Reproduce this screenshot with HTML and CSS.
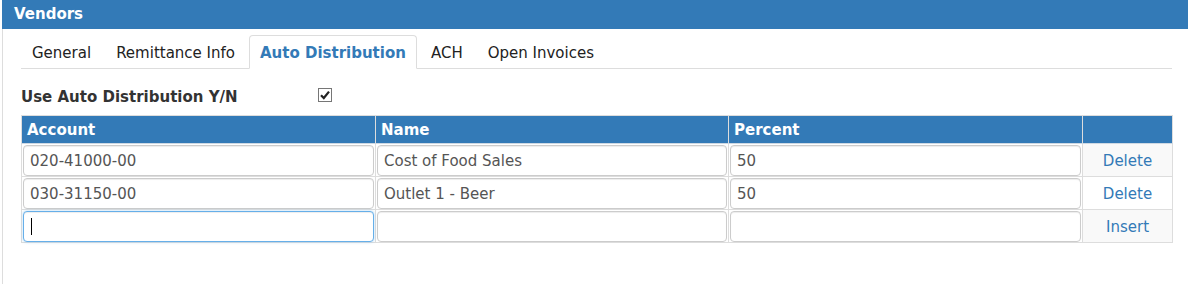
FILE: index.html
```html
<!DOCTYPE html>
<html lang="en">
<head>
    <meta charset="UTF-8">
    <title>Vendors</title>
    <link rel="stylesheet" href="styles.css">
</head>
<body>
    <div class="panel">
        <div class="panel-heading">Vendors</div>
        <div class="panel-body">
            <ul class="nav-tabs">
                <li><a href="#">General</a></li>
                <li><a href="#">Remittance Info</a></li>
                <li class="active"><a href="#">Auto Distribution</a></li>
                <li><a href="#">ACH</a></li>
                <li><a href="#">Open Invoices</a></li>
            </ul>

            <div class="form-row">
                <span class="form-label">Use Auto Distribution Y/N</span>
                <span class="form-check">
                    <svg viewBox="0 0 14 14" width="14" height="14">
                        <rect x="0.5" y="0.5" width="13" height="13" fill="#ffffff" stroke="#767676"/>
                        <path d="M3 7.2 L5.8 10 L11 3.6" fill="none" stroke="#222222" stroke-width="2.2"/>
                    </svg>
                </span>
            </div>

            <table class="dist-table">
                <colgroup>
                    <col class="col-account">
                    <col class="col-name">
                    <col class="col-percent">
                    <col class="col-action">
                </colgroup>
                <thead>
                    <tr>
                        <th>Account</th>
                        <th>Name</th>
                        <th>Percent</th>
                        <th></th>
                    </tr>
                </thead>
                <tbody>
                    <tr>
                        <td><input class="cell-input" type="text" value="020-41000-00"></td>
                        <td><input class="cell-input" type="text" value="Cost of Food Sales"></td>
                        <td><input class="cell-input" type="text" value="50"></td>
                        <td class="action"><a href="#">Delete</a></td>
                    </tr>
                    <tr>
                        <td><input class="cell-input" type="text" value="030-31150-00"></td>
                        <td><input class="cell-input" type="text" value="Outlet 1 - Beer"></td>
                        <td><input class="cell-input" type="text" value="50"></td>
                        <td class="action"><a href="#">Delete</a></td>
                    </tr>
                    <tr>
                        <td><input class="cell-input focused" type="text" value=""><span class="caret"></span></td>
                        <td><input class="cell-input" type="text" value=""></td>
                        <td><input class="cell-input" type="text" value=""></td>
                        <td class="action"><a href="#">Insert</a></td>
                    </tr>
                </tbody>
            </table>
        </div>
    </div>
</body>
</html>
```

FILE: styles.css
```css
:root {
    --blue: #337ab7;
    --line: #dddddd;
    --text: #333333;
}

body {
    margin: 0;
    font-family: 'DejaVu Sans', Verdana, sans-serif;
    font-size: 15px;
    color: var(--text);
    background: #ffffff;
}

.panel { margin: 0 1px 0 2px; }

.panel-heading {
    background-color: var(--blue);
    color: #ffffff;
    font-weight: bold;
    height: 29px;
    line-height: 28px;
    padding-left: 12px;
}

.panel-body {
    border-left: 1px solid var(--line);
    padding: 6px 16px 0 18px;
    height: 249px;
}

/* tabs */
.nav-tabs {
    list-style: none;
    margin: 0;
    padding: 0;
    display: flex;
    border-bottom: 1px solid var(--line);
}
.nav-tabs li { margin-bottom: -1px; margin-right: 3px; }
.nav-tabs a {
    display: block;
    padding: 8px 10px 6px;
    line-height: 18px;
    color: #222222;
    text-decoration: none;
    border: 1px solid transparent;
    border-radius: 4px 4px 0 0;
}
.nav-tabs .active a {
    color: var(--blue);
    font-weight: bold;
    background: #ffffff;
    border-color: var(--line);
    border-bottom-color: #ffffff;
}

/* checkbox row */
.form-row {
    display: flex;
    align-items: center;
    margin-top: 17px;
    height: 22px;
}
.form-label { width: 297px; font-weight: bold; color: var(--text); }
.form-check { display: flex; margin-top: -5px; }

/* distribution grid */
.dist-table {
    margin-top: 7px;
    width: 100%;
    border-collapse: collapse;
    table-layout: fixed;
}
.col-account { width: 354px; }
.col-name { width: 353px; }
.col-percent { width: 354px; }
.col-action { width: 90px; }

.dist-table th {
    background-color: var(--blue);
    color: #ffffff;
    text-align: left;
    font-weight: bold;
    height: 26px;
    padding: 1px 5px 0;
    border: 1px solid var(--line);
    border-bottom-color: #cfd9e3;
}

.dist-table td {
    border: 1px solid var(--line);
    padding: 1px 1px 0 1px;
    position: relative;
}
.dist-table tbody tr:nth-child(odd) td.action { background: #f9f9f9; }

.cell-input {
    display: block;
    box-sizing: border-box;
    width: 100%;
    height: 31px;
    padding: 0 6px;
    font-family: inherit;
    font-size: 15px;
    color: #555555;
    border: 1px solid #cccccc;
    border-radius: 4px;
    box-shadow: inset 0 1px 1px rgba(0,0,0,0.075);
    background: #ffffff;
}
.cell-input.focused {
    border-color: #66afe9;
    box-shadow: inset 0 1px 1px rgba(0,0,0,0.075), 0 0 3px rgba(102,175,233,0.5);
}
.caret {
    position: absolute;
    left: 9px;
    top: 8px;
    width: 1px;
    height: 17px;
    background: #000000;
}

.action { text-align: center; }
.action a { color: var(--blue); text-decoration: none; }
```
